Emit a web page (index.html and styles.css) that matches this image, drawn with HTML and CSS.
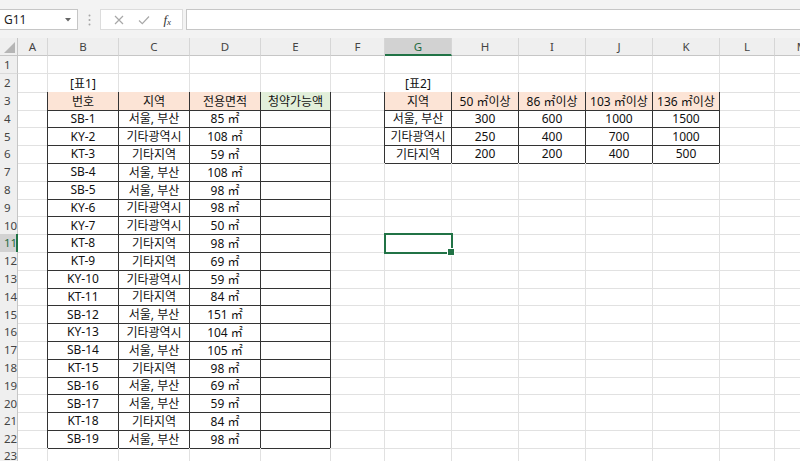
FILE: index.html
```html
<!DOCTYPE html>
<html lang="ko">
<head>
<meta charset="utf-8">
<title>Excel</title>
<link rel="stylesheet" href="styles.css">
</head>
<body>
<div class="app">
  <div class="bar">
    <div class="namebox"><span>G11</span><svg class="dd" width="6" height="4" viewBox="0 0 6 4"><path d="M0 0h6L3 3.5z" fill="#666"/></svg></div>
    <div class="grip"><svg width="3" height="12" viewBox="0 0 3 12"><circle cx="1.5" cy="1.5" r="1" fill="#a6a6a6"/><circle cx="1.5" cy="6" r="1" fill="#a6a6a6"/><circle cx="1.5" cy="10.5" r="1" fill="#a6a6a6"/></svg></div>
    <div class="fbtns">
      <svg width="10" height="10" viewBox="0 0 10 10"><path d="M1 1L9 9M9 1L1 9" stroke="#a8a8a8" stroke-width="1.2" fill="none"/></svg>
      <svg width="12" height="10" viewBox="0 0 12 10"><path d="M1 5.5L4.3 8.6L11 1.5" stroke="#a8a8a8" stroke-width="1.2" fill="none"/></svg>
      <span class="fx">f<sub>x</sub></span>
    </div>
    <div class="finput"></div>
  </div>
  <div class="sheet">
    <div class="row hdr"><div class="corner"><svg width="11" height="11" viewBox="0 0 11 11"><path d="M11 0V11H0z" fill="#b5b5b5"/></svg></div><div class="ch">A</div><div class="ch">B</div><div class="ch">C</div><div class="ch">D</div><div class="ch">E</div><div class="ch">F</div><div class="ch on">G</div><div class="ch">H</div><div class="ch">I</div><div class="ch">J</div><div class="ch">K</div><div class="ch">L</div><div class="ch">M</div></div>

    <div class="row"><div class="rh">1</div><div class="c"></div><div class="c"></div><div class="c"></div><div class="c"></div><div class="c"></div><div class="c"></div><div class="c"></div><div class="c"></div><div class="c"></div><div class="c"></div><div class="c"></div><div class="c"></div><div class="c"></div></div>
    <div class="row"><div class="rh">2</div><div class="c"></div><div class="c ab">[표1]</div><div class="c ab"></div><div class="c ab"></div><div class="c ab"></div><div class="c"></div><div class="c ab">[표2]</div><div class="c ab"></div><div class="c ab"></div><div class="c ab"></div><div class="c ab"></div><div class="c"></div><div class="c"></div></div>
    <div class="row"><div class="rh">3</div><div class="c lb"></div><div class="c t pe">번호</div><div class="c t pe">지역</div><div class="c t pe">전용면적</div><div class="c t gr">청약가능액</div><div class="c lb"></div><div class="c t pe">지역</div><div class="c t pe">50 ㎡이상</div><div class="c t pe">86 ㎡이상</div><div class="c t pe">103 ㎡이상</div><div class="c t pe">136 ㎡이상</div><div class="c"></div><div class="c"></div></div>
    <div class="row"><div class="rh">4</div><div class="c lb"></div><div class="c t">SB-1</div><div class="c t">서울, 부산</div><div class="c t">85 ㎡</div><div class="c t"></div><div class="c lb"></div><div class="c t">서울, 부산</div><div class="c t">300</div><div class="c t">600</div><div class="c t">1000</div><div class="c t">1500</div><div class="c"></div><div class="c"></div></div>
    <div class="row"><div class="rh">5</div><div class="c lb"></div><div class="c t">KY-2</div><div class="c t">기타광역시</div><div class="c t">108 ㎡</div><div class="c t"></div><div class="c lb"></div><div class="c t">기타광역시</div><div class="c t">250</div><div class="c t">400</div><div class="c t">700</div><div class="c t">1000</div><div class="c"></div><div class="c"></div></div>
    <div class="row"><div class="rh">6</div><div class="c lb"></div><div class="c t">KT-3</div><div class="c t">기타지역</div><div class="c t">59 ㎡</div><div class="c t"></div><div class="c lb"></div><div class="c t">기타지역</div><div class="c t">200</div><div class="c t">200</div><div class="c t">400</div><div class="c t">500</div><div class="c"></div><div class="c"></div></div>
    <div class="row"><div class="rh">7</div><div class="c lb"></div><div class="c t">SB-4</div><div class="c t">서울, 부산</div><div class="c t">108 ㎡</div><div class="c t"></div><div class="c"></div><div class="c"></div><div class="c"></div><div class="c"></div><div class="c"></div><div class="c"></div><div class="c"></div><div class="c"></div></div>
    <div class="row"><div class="rh">8</div><div class="c lb"></div><div class="c t">SB-5</div><div class="c t">서울, 부산</div><div class="c t">98 ㎡</div><div class="c t"></div><div class="c"></div><div class="c"></div><div class="c"></div><div class="c"></div><div class="c"></div><div class="c"></div><div class="c"></div><div class="c"></div></div>
    <div class="row"><div class="rh">9</div><div class="c lb"></div><div class="c t">KY-6</div><div class="c t">기타광역시</div><div class="c t">98 ㎡</div><div class="c t"></div><div class="c"></div><div class="c"></div><div class="c"></div><div class="c"></div><div class="c"></div><div class="c"></div><div class="c"></div><div class="c"></div></div>
    <div class="row"><div class="rh">10</div><div class="c lb"></div><div class="c t">KY-7</div><div class="c t">기타광역시</div><div class="c t">50 ㎡</div><div class="c t"></div><div class="c"></div><div class="c"></div><div class="c"></div><div class="c"></div><div class="c"></div><div class="c"></div><div class="c"></div><div class="c"></div></div>
    <div class="row"><div class="rh on">11</div><div class="c lb"></div><div class="c t">KT-8</div><div class="c t">기타지역</div><div class="c t">98 ㎡</div><div class="c t"></div><div class="c"></div><div class="c sel"></div><div class="c"></div><div class="c"></div><div class="c"></div><div class="c"></div><div class="c"></div><div class="c"></div></div>
    <div class="row"><div class="rh">12</div><div class="c lb"></div><div class="c t">KT-9</div><div class="c t">기타지역</div><div class="c t">69 ㎡</div><div class="c t"></div><div class="c"></div><div class="c"></div><div class="c"></div><div class="c"></div><div class="c"></div><div class="c"></div><div class="c"></div><div class="c"></div></div>
    <div class="row"><div class="rh">13</div><div class="c lb"></div><div class="c t">KY-10</div><div class="c t">기타광역시</div><div class="c t">59 ㎡</div><div class="c t"></div><div class="c"></div><div class="c"></div><div class="c"></div><div class="c"></div><div class="c"></div><div class="c"></div><div class="c"></div><div class="c"></div></div>
    <div class="row"><div class="rh">14</div><div class="c lb"></div><div class="c t">KT-11</div><div class="c t">기타지역</div><div class="c t">84 ㎡</div><div class="c t"></div><div class="c"></div><div class="c"></div><div class="c"></div><div class="c"></div><div class="c"></div><div class="c"></div><div class="c"></div><div class="c"></div></div>
    <div class="row"><div class="rh">15</div><div class="c lb"></div><div class="c t">SB-12</div><div class="c t">서울, 부산</div><div class="c t">151 ㎡</div><div class="c t"></div><div class="c"></div><div class="c"></div><div class="c"></div><div class="c"></div><div class="c"></div><div class="c"></div><div class="c"></div><div class="c"></div></div>
    <div class="row"><div class="rh">16</div><div class="c lb"></div><div class="c t">KY-13</div><div class="c t">기타광역시</div><div class="c t">104 ㎡</div><div class="c t"></div><div class="c"></div><div class="c"></div><div class="c"></div><div class="c"></div><div class="c"></div><div class="c"></div><div class="c"></div><div class="c"></div></div>
    <div class="row"><div class="rh">17</div><div class="c lb"></div><div class="c t">SB-14</div><div class="c t">서울, 부산</div><div class="c t">105 ㎡</div><div class="c t"></div><div class="c"></div><div class="c"></div><div class="c"></div><div class="c"></div><div class="c"></div><div class="c"></div><div class="c"></div><div class="c"></div></div>
    <div class="row"><div class="rh">18</div><div class="c lb"></div><div class="c t">KT-15</div><div class="c t">기타지역</div><div class="c t">98 ㎡</div><div class="c t"></div><div class="c"></div><div class="c"></div><div class="c"></div><div class="c"></div><div class="c"></div><div class="c"></div><div class="c"></div><div class="c"></div></div>
    <div class="row"><div class="rh">19</div><div class="c lb"></div><div class="c t">SB-16</div><div class="c t">서울, 부산</div><div class="c t">69 ㎡</div><div class="c t"></div><div class="c"></div><div class="c"></div><div class="c"></div><div class="c"></div><div class="c"></div><div class="c"></div><div class="c"></div><div class="c"></div></div>
    <div class="row"><div class="rh">20</div><div class="c lb"></div><div class="c t">SB-17</div><div class="c t">서울, 부산</div><div class="c t">59 ㎡</div><div class="c t"></div><div class="c"></div><div class="c"></div><div class="c"></div><div class="c"></div><div class="c"></div><div class="c"></div><div class="c"></div><div class="c"></div></div>
    <div class="row"><div class="rh">21</div><div class="c lb"></div><div class="c t">KT-18</div><div class="c t">기타지역</div><div class="c t">84 ㎡</div><div class="c t"></div><div class="c"></div><div class="c"></div><div class="c"></div><div class="c"></div><div class="c"></div><div class="c"></div><div class="c"></div><div class="c"></div></div>
    <div class="row"><div class="rh">22</div><div class="c lb"></div><div class="c t">SB-19</div><div class="c t">서울, 부산</div><div class="c t">98 ㎡</div><div class="c t"></div><div class="c"></div><div class="c"></div><div class="c"></div><div class="c"></div><div class="c"></div><div class="c"></div><div class="c"></div><div class="c"></div></div>
    <div class="row"><div class="rh">23</div><div class="c"></div><div class="c"></div><div class="c"></div><div class="c"></div><div class="c"></div><div class="c"></div><div class="c"></div><div class="c"></div><div class="c"></div><div class="c"></div><div class="c"></div><div class="c"></div><div class="c"></div></div>
  </div>
</div>
</body>
</html>
```
FILE: styles.css
```css
* { box-sizing: border-box; }
body {
  margin: 0;
  background: #ffffff;
  font-family: "Noto Sans", "Noto Sans CJK KR", sans-serif;
  overflow: hidden;
}
.app {
  width: 800px;
  height: 461px;
  overflow: hidden;
  display: flex;
  flex-direction: column;
}
.bar {
  height: 38px;
  flex: none;
  background: #f3f3f3;
  display: flex;
  align-items: flex-start;
  padding-top: 9px;
}
.namebox {
  width: 78px;
  height: 21px;
  background: #ffffff;
  border: 1px solid #c6c6c6;
  border-left: none;
  display: flex;
  align-items: center;
  justify-content: space-between;
  padding: 0 6px 0 4px;
  font-size: 12px;
  color: #222222;
}
.grip {
  width: 22px;
  height: 21px;
  display: flex;
  align-items: center;
  justify-content: center;
}
.fbtns {
  width: 83px;
  height: 21px;
  background: #ffffff;
  border: 1px solid #dcdcdc;
  display: flex;
  align-items: center;
  justify-content: space-around;
  padding: 0 4px 0 6px;
}
.fx {
  font-family: "Liberation Serif", serif;
  font-style: italic;
  font-size: 13px;
  color: #333333;
  line-height: 1;
}
.fx sub { font-size: 9px; vertical-align: -1px; }
.finput {
  flex: 1;
  height: 21px;
  margin-left: 3px;
  background: #ffffff;
  border: 1px solid #c6c6c6;
  border-right: none;
}
.sheet {
  flex: 1;
  overflow: hidden;
}
.row {
  display: grid;
  grid-template-columns: 18px 30px 71px 71px 71px 70px 54px 67px 67px 67px 67px 67px 55px 55px;
  height: 17.8px;
  width: 830px;
}
.row.hdr { height: 18px; }
.corner {
  background: #efefef;
  border-right: 1px solid #c6c6c6;
  border-bottom: 1px solid #c6c6c6;
  display: flex;
  align-items: flex-end;
  justify-content: flex-end;
  padding: 0 2px 2px 0;
}
.ch {
  background: #efefef;
  border-right: 1px solid #d6d6d6;
  border-bottom: 1px solid #c6c6c6;
  display: flex;
  align-items: center;
  justify-content: center;
  font-size: 11.5px;
  color: #444444;
}
.ch.on {
  background: #d2d2d2;
  color: #1e6b41;
  border-bottom: 2px solid #217346;
}
.rh {
  background: #efefef;
  border-right: 1px solid #c6c6c6;
  border-bottom: 1px solid #dadada;
  display: flex;
  align-items: center;
  padding-left: 4px;
  font-size: 11.5px;
  color: #444444;
}
.rh.on {
  background: #d2d2d2;
  color: #1e6b41;
  border-right: 2px solid #217346;
}
.c {
  border-right: 1px solid #e1e1e1;
  border-bottom: 1px solid #e1e1e1;
  display: flex;
  align-items: center;
  justify-content: center;
  font-size: 12px;
  color: #111111;
  white-space: nowrap;
}
.t {
  border-right-color: #333333;
  border-bottom-color: #333333;
}
.ab { border-bottom-color: #333333; }
.lb { border-right-color: #333333; }
.pe { background: #fce4d6; }
.gr { background: #e2efda; }
.sel {
  position: relative;
  z-index: 1;
  outline: 2px solid #217346;
  outline-offset: -1px;
}
.sel::after {
  content: "";
  position: absolute;
  right: -4px;
  bottom: -4px;
  width: 6px;
  height: 6px;
  background: #217346;
  border: 1px solid #ffffff;
}
```
